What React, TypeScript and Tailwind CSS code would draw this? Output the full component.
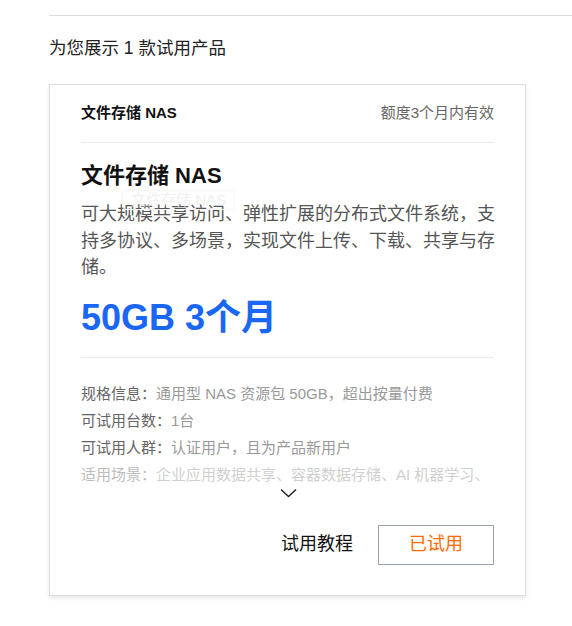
const specs = [
  { label: "规格信息：", value: "通用型 NAS 资源包 50GB，超出按量付费" },
  { label: "可试用台数：", value: "1台" },
  { label: "可试用人群：", value: "认证用户，且为产品新用户" },
];

export default function App() {
  return (
    <div
      className="min-h-[626px] w-[572px] bg-white pt-[15px] pl-[49px]"
      style={{ fontFamily: '"Liberation Sans", "Noto Sans CJK SC", sans-serif' }}
    >
      <div className="border-t border-[#dcdcdc]" />
      <h2 className="mt-[20px] text-[17.5px] leading-[24px] text-[#222]">为您展示 1 款试用产品</h2>

      <div className="mt-[24px] w-[477px] border border-[#dedede] bg-white px-[31px] pb-[30px] shadow-[0_2px_4px_rgba(0,0,0,0.1)]">
        <div className="flex h-[58px] items-center justify-between border-b border-[#ebebeb]">
          <span className="text-[15px] font-bold text-[#111]">文件存储 NAS</span>
          <span className="text-[15px] text-[#666]">额度3个月内有效</span>
        </div>

        <div className="relative mt-[19px]">
          <h3 className="text-[22px] font-bold leading-[28px] text-[#111]">文件存储 NAS</h3>
          <div className="absolute left-[41px] top-[28px] rounded-sm border border-[#f6f6f6] px-[8px] text-[15px] leading-[18px] text-[#f0f0f0]">
            文件存储 NAS
          </div>
        </div>

        <p className="mt-[11px] w-[416px] text-[18px] leading-[26.5px] text-[#555]">
          可大规模共享访问、弹性扩展的分布式文件系统，支持多协议、多场景，实现文件上传、下载、共享与存储。
        </p>

        <div className="mt-[17px] text-[36px] font-bold leading-[40px] text-[#1a66f5]">50GB 3个月</div>

        <div className="mt-[19px] border-t border-[#ebebeb]" />

        <ul className="mt-[22px] text-[15px] leading-[27px]">
          {specs.map((s) => (
            <li key={s.label}>
              <span className="text-[#666]">{s.label}</span>
              <span className="text-[#999]">{s.value}</span>
            </li>
          ))}
          <li className="whitespace-nowrap">
            <span className="text-[#bcbcbc]">适用场景：</span>
            <span className="text-[#cfcfcf]">企业应用数据共享、容器数据存储、AI 机器学习、</span>
          </li>
        </ul>

        <div className="flex justify-center pl-[1px]">
          <svg width="17" height="10" viewBox="0 0 17 10" fill="none" stroke="#222" strokeWidth="1.5">
            <path d="M1 1.5l7.5 7 7.5-7" />
          </svg>
        </div>

        <div className="mt-[27px] flex items-center justify-end gap-[25px]">
          <button className="text-[18px] text-[#111]">试用教程</button>
          <button className="h-[40px] w-[116px] border border-[#9aa3ad] text-[18px] text-[#ff6a00]">已试用</button>
        </div>
      </div>
    </div>
  );
}
